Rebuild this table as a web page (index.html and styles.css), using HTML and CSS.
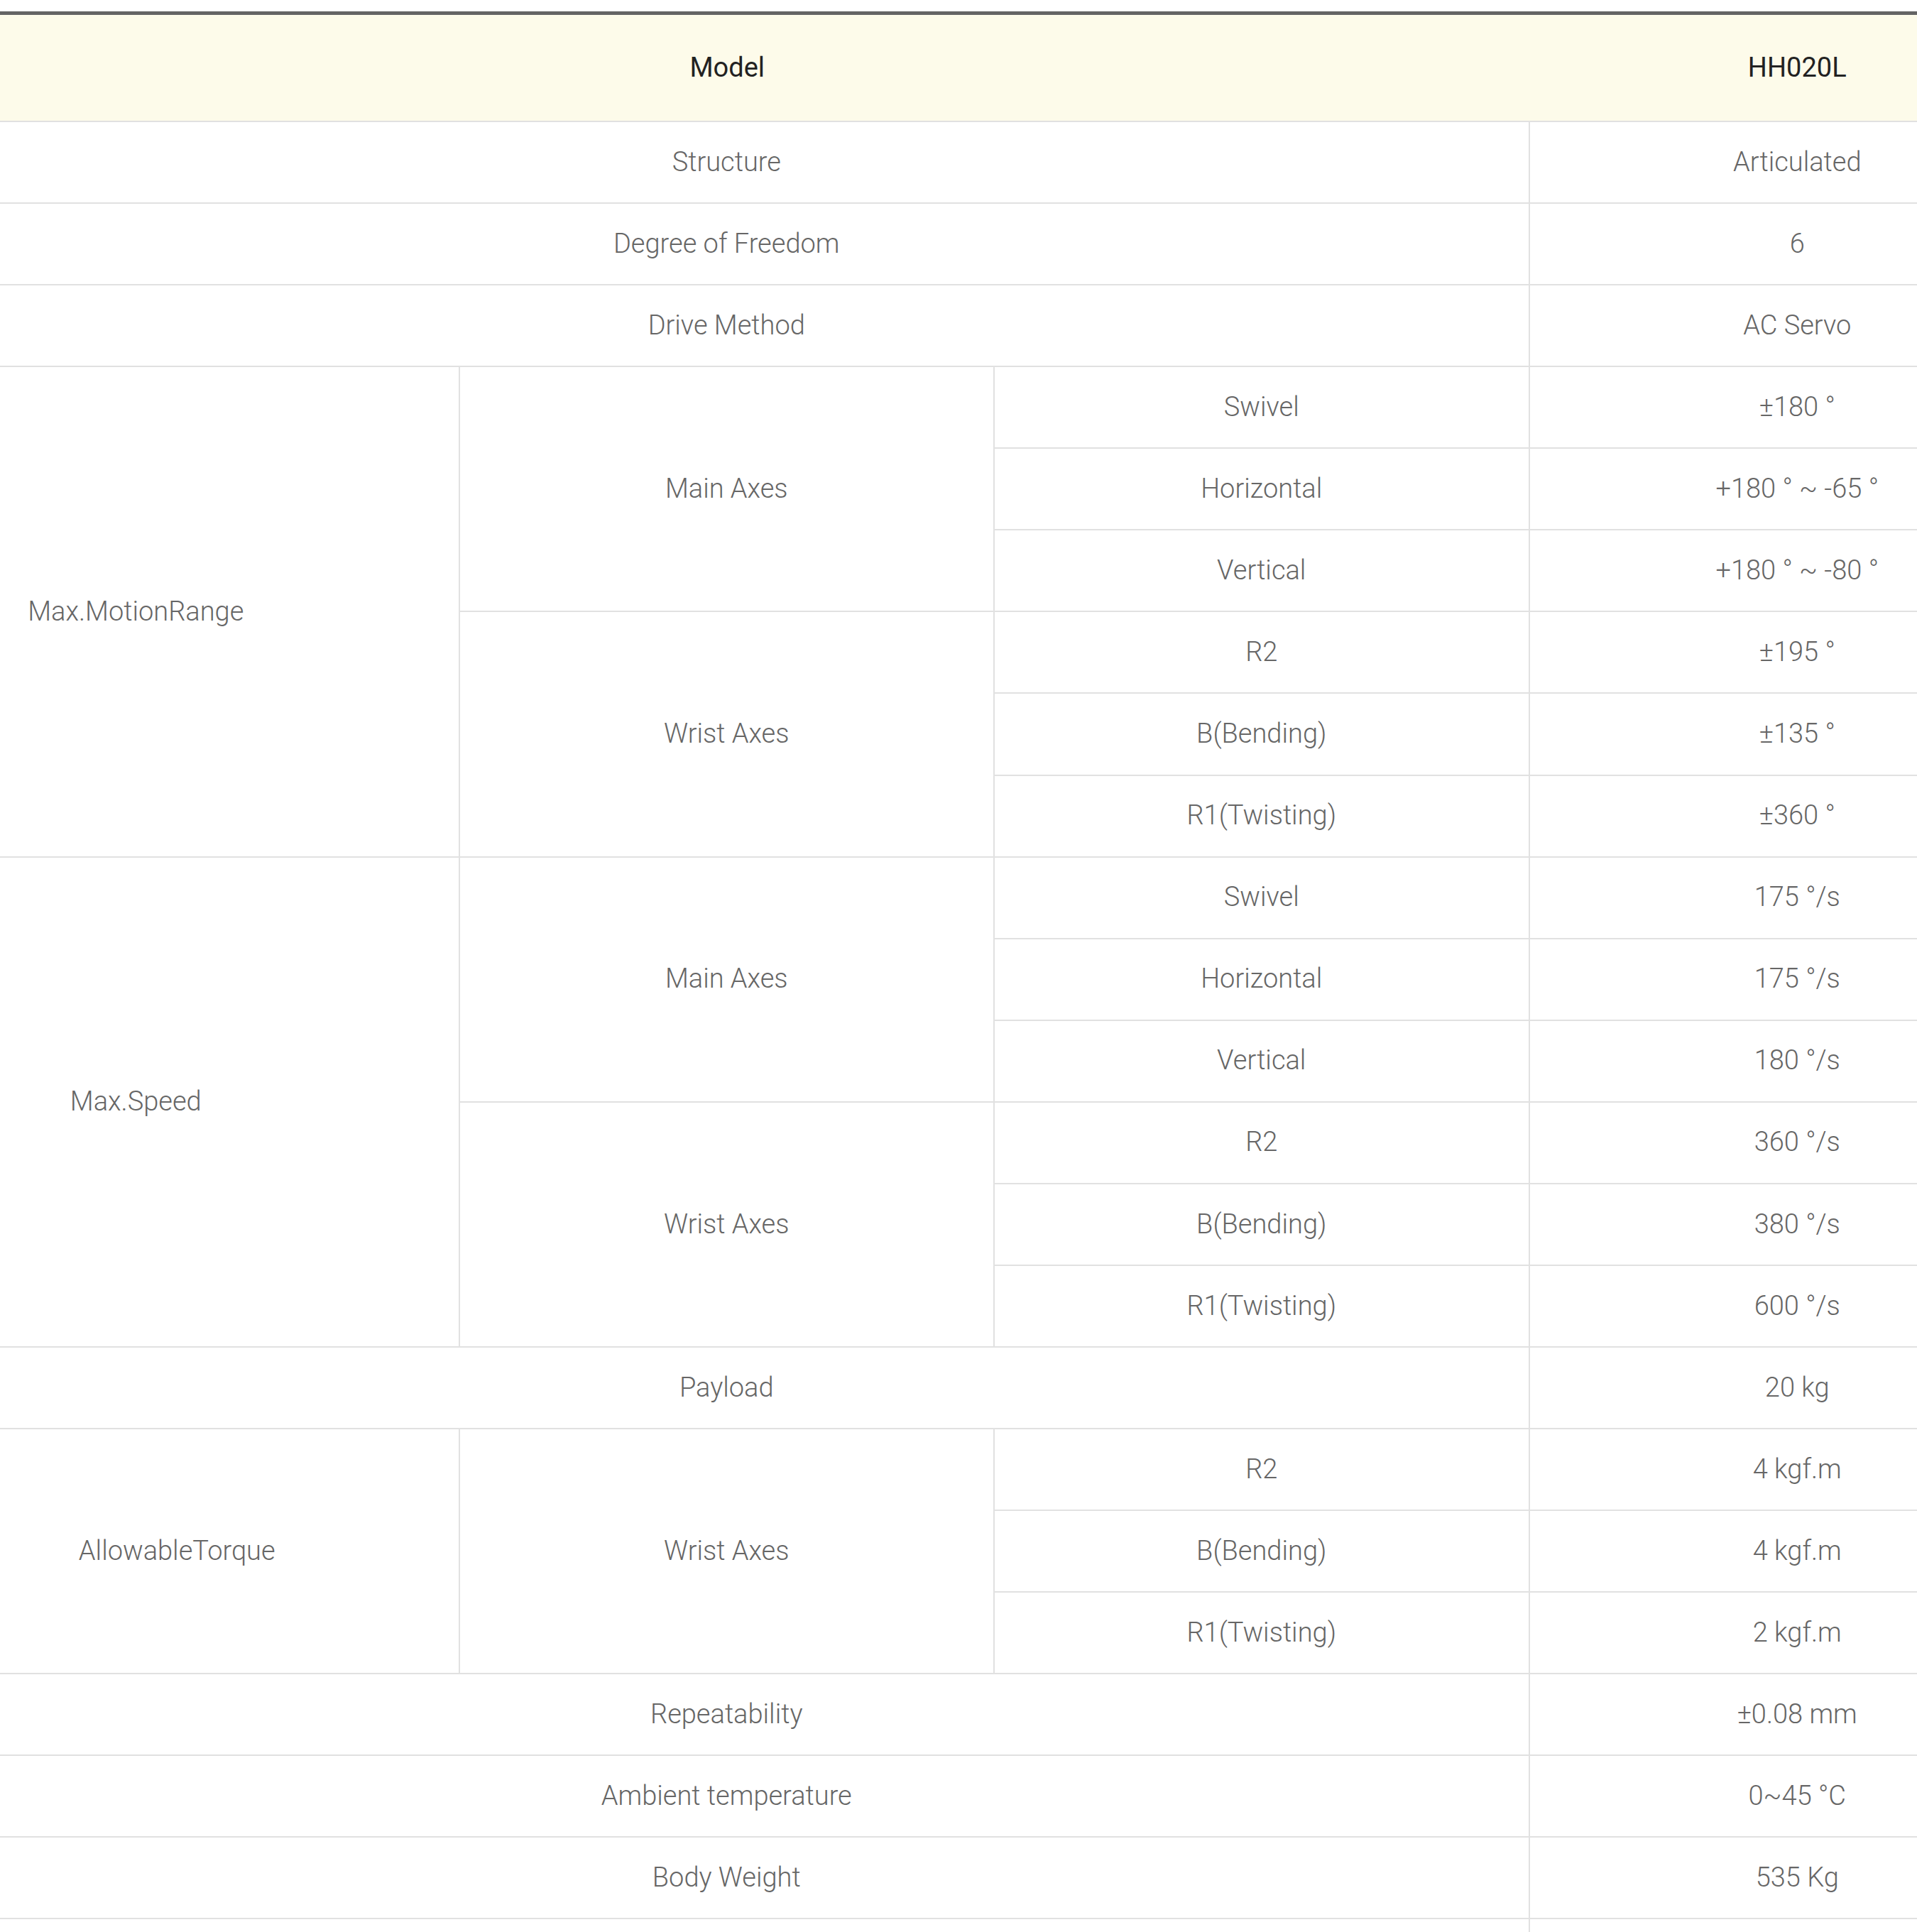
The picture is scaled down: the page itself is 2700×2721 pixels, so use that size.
FILE: index.html
```html
<!DOCTYPE html>
<html lang="en">
<head>
<meta charset="utf-8">
<title>HH020L Specifications</title>
<link rel="stylesheet" href="styles.css">
</head>
<body>
<div class="scroller">
<table class="spec">
  <colgroup><col><col><col><col></colgroup>
  <thead>
    <tr class="head">
      <th colspan="3">Model</th>
      <th class="last">HH020L</th>
    </tr>
  </thead>
  <tbody>
    <tr><td colspan="3">Structure</td><td class="last">Articulated</td></tr>
    <tr><td colspan="3">Degree of Freedom</td><td class="last">6</td></tr>
    <tr><td colspan="3">Drive Method</td><td class="last">AC Servo</td></tr>

    <tr><td rowspan="6" class="group">Max.MotionRange</td><td rowspan="3">Main Axes</td><td>Swivel</td><td class="last">±180 °</td></tr>
    <tr><td>Horizontal</td><td class="last">+180 ° ~ -65 °</td></tr>
    <tr><td>Vertical</td><td class="last">+180 ° ~ -80 °</td></tr>
    <tr><td rowspan="3">Wrist Axes</td><td>R2</td><td class="last">±195 °</td></tr>
    <tr><td>B(Bending)</td><td class="last">±135 °</td></tr>
    <tr><td>R1(Twisting)</td><td class="last">±360 °</td></tr>

    <tr><td rowspan="6" class="group">Max.Speed</td><td rowspan="3">Main Axes</td><td>Swivel</td><td class="last">175 °/s</td></tr>
    <tr><td>Horizontal</td><td class="last">175 °/s</td></tr>
    <tr><td>Vertical</td><td class="last">180 °/s</td></tr>
    <tr><td rowspan="3">Wrist Axes</td><td>R2</td><td class="last">360 °/s</td></tr>
    <tr><td>B(Bending)</td><td class="last">380 °/s</td></tr>
    <tr><td>R1(Twisting)</td><td class="last">600 °/s</td></tr>

    <tr><td colspan="3">Payload</td><td class="last">20 kg</td></tr>

    <tr><td rowspan="3" class="group group-wide">AllowableTorque</td><td rowspan="3">Wrist Axes</td><td>R2</td><td class="last">4 kgf.m</td></tr>
    <tr><td>B(Bending)</td><td class="last">4 kgf.m</td></tr>
    <tr><td>R1(Twisting)</td><td class="last">2 kgf.m</td></tr>

    <tr><td colspan="3">Repeatability</td><td class="last">±0.08 mm</td></tr>
    <tr><td colspan="3">Ambient temperature</td><td class="last">0~45 °C</td></tr>
    <tr><td colspan="3">Body Weight</td><td class="last">535 Kg</td></tr>
    <tr><td colspan="3">&nbsp;</td><td class="last">&nbsp;</td></tr>
  </tbody>
</table>
</div>
</body>
</html>
```

FILE: styles.css
```css
html, body {
  margin: 0;
  padding: 0;
  background: #ffffff;
}

.scroller {
  padding-top: 16px;
  overflow: hidden;
  width: 2700px;
}

.spec {
  width: 3014px;
  margin-left: -106px;
  table-layout: fixed;
  border-collapse: separate;
  border-spacing: 0;
  border-top: 5px solid #646464;
  font-family: Roboto, "Liberation Sans", Arial, sans-serif;
}

.spec col {
  width: 25%;
}

.spec th,
.spec td {
  box-sizing: content-box;
  padding: 0;
  text-align: center;
  vertical-align: middle;
  border-bottom: 2px solid #e1e1e1;
  border-right: 2px solid #e1e1e1;
  font-size: 38px;
  line-height: 1.2;
}

.spec th {
  height: 149px;
  background: #fdfbea;
  color: #222222;
  font-weight: 400;
  border-right: none;
}

.spec td {
  height: 113.07px;
  color: #666666;
  font-weight: 300;
}

.spec .last {
  border-right: none;
}

.spec .group {
  padding-right: 157px;
}

.spec .group-wide {
  padding-right: 41px;
}
```
